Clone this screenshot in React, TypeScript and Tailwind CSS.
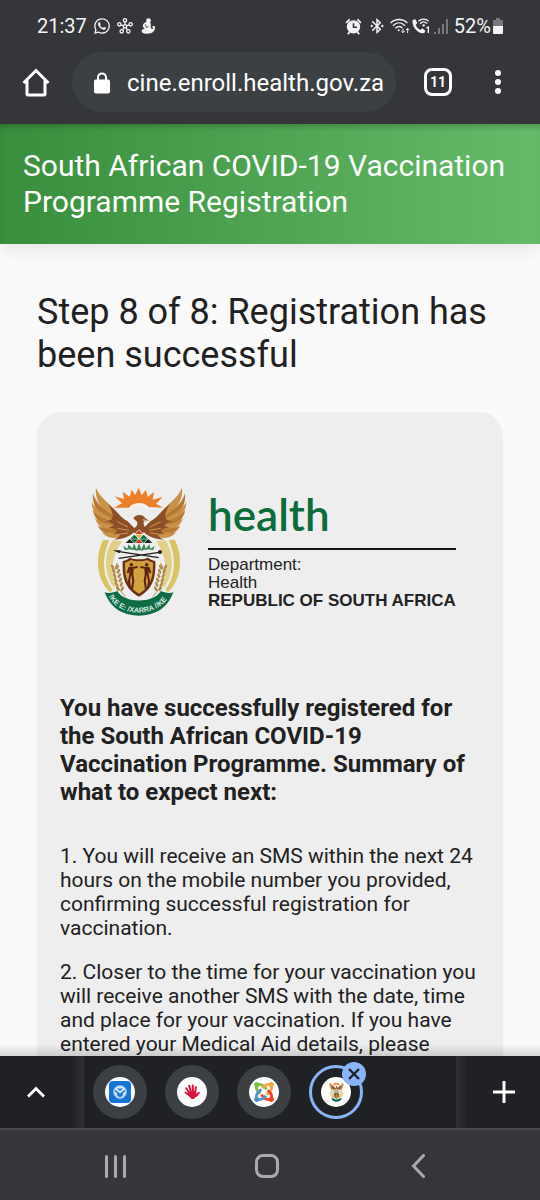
import React from "react";
import { FaWhatsapp } from "react-icons/fa";
import { MdBluetoothConnected } from "react-icons/md";

type IconProps = {
    className?: string;
};

const LEFT_FEATHERS = [
    "M48 24 C60 56 94 74 122 110 L112 122 C74 100 42 66 48 24Z",
    "M39 40 C48 76 80 94 114 118 L108 128 C64 114 34 84 39 40Z",
    "M35 66 C50 96 82 108 114 126 L108 135 C66 132 36 106 35 66Z",
    "M38 92 C56 116 86 123 118 132 L112 143 C74 148 46 126 38 92Z",
    "M44 116 C62 133 90 136 122 138 L116 151 C82 160 56 146 44 116Z",
    "M53 138 C72 149 98 147 128 146 L122 160 C90 171 66 162 53 138Z",
    "M66 158 C84 162 104 157 134 152 L128 168 C104 180 80 176 66 158Z",
];

const WHEAT = [262, 275, 288, 301, 314, 327];

const Half: React.FC = () => (
    <>
        {LEFT_FEATHERS.map((d, idx) => (
            <path key={d} d={d} fill={idx % 2 ? "#b77a30" : "#c9924a"} />
        ))}
        <path
            d="M84 74 C112 94 118 112 142 124 L168 150 C156 166 140 176 102 180 C124 170 128 160 96 163 C118 154 116 147 86 144 C108 138 104 132 76 124 C104 124 104 104 84 74Z"
            fill="#8c4f26"
        />
        <path d="M112 126 L144 142 M112 146 L146 152 M116 164 L144 160" stroke="#c9975a" strokeWidth="3" />
        <path d="M70 180 C44 228 48 298 90 338 L98 330 C68 292 64 236 88 182Z" fill="#d8c466" />
        <path d="M98 182 C70 222 72 286 102 324 L108 316 C90 280 94 230 126 184Z" fill="#e0d089" />
        <path d="M112 250 C94 284 104 318 136 350" fill="none" stroke="#a88440" strokeWidth="3" />
        {WHEAT.map((y, idx) => (
            <g key={y} fill="#b08b47">
                <ellipse cx={98 + idx * 3} cy={y} rx="4" ry="8" transform={`rotate(-32 ${98 + idx * 3} ${y})`} />
                <ellipse cx={112 + idx * 3} cy={y} rx="4" ry="8" transform={`rotate(28 ${112 + idx * 3} ${y})`} />
            </g>
        ))}
    </>
);

const Figure: React.FC = () => (
    <g fill="#5d2415" stroke="#5d2415" strokeLinejoin="round">
        <circle cx="154" cy="255" r="5" />
        <path d="M147 262 L161 262 L159 286 L149 286Z" />
        <path d="M148 264 L143 280 M160 264 L173 262 M151 285 L147 304 L150 326 M157 285 L160 304 L156 328" fill="none" strokeWidth="6" />
    </g>
);

const CoatOfArms: React.FC<IconProps & { motto?: boolean }> = ({ className, motto = false }) => (
    <svg viewBox="30 22 294 390" className={className} fill="none" aria-hidden="true">
        <Half />
        <g transform="translate(354 0) scale(-1 1)">
            <Half />
        </g>

        <path
            d="M104 50 L132 58 L128 36 L149 51 L155 30 L166 46 L176 24 L185 47 L198 30 L203 52 L222 37 L218 60 L248 52 L228 72 L250 84 L206 82 C194 66 160 66 147 84 L102 84 L126 71Z"
            fill="#ec7f2a"
        />
        <path d="M150 88 C158 70 194 70 203 88" stroke="#f7f2ea" strokeWidth="6" />

        <path d="M160 116 C168 102 190 104 195 115 L207 123 L192 125 C188 134 194 144 204 152 L176 166 L148 152 C166 146 176 136 171 126Z" fill="#8c4f26" />
        <path d="M188 118 L207 123 L192 127Z" fill="#d9b98c" />

        <path d="M177 149 L217 189 L137 189Z" fill="#f5f1e6" />
        <path d="M177 151 L188 163 L166 163Z" fill="#d23b2b" />
        <path d="M163 165 L175 177 L151 177Z M191 165 L203 177 L179 177Z" fill="#0c6b3c" />
        <path d="M166 165 L188 165 L177 176Z" fill="#e3b23a" />
        <path d="M149 178 L161 190 L137 190Z M205 178 L217 190 L193 190Z" fill="#262320" />
        <path d="M177 178 L189 190 L165 190Z" fill="#d23b2b" />
        <path d="M152 179 L174 179 L163 190Z M180 179 L202 179 L191 190Z" fill="#0c6b3c" />
        <path
            d="M177 190 L185 212 L169 212Z M162 191 L172 214 L156 209Z M192 191 L198 209 L182 214Z M146 194 L160 211 L142 208Z M208 194 L212 208 L194 211Z M130 198 L146 210 L134 211Z M224 198 L220 211 L208 210Z"
            fill="#3c8a5b"
        />

        <path d="M118 216 L236 234 M238 218 L116 236" stroke="#211e1c" strokeWidth="4" />
        <path d="M98 212 L122 212 L119 221Z" fill="#211e1c" />
        <circle cx="240" cy="217" r="6" fill="#211e1c" />

        <path d="M128 244 C138 242 144 238 150 234 C164 240 190 240 204 234 C210 238 216 242 226 244 C228 296 218 328 177 351 C136 328 126 296 128 244Z" fill="#6b2e18" />
        <path d="M135 249 C143 247 148 244 152 241 C166 246 188 246 202 241 C206 244 211 247 219 249 C220 292 212 321 177 342 C142 321 134 292 135 249Z" fill="#d2a23f" />
        <Figure />
        <g transform="translate(354 0) scale(-1 1)">
            <Figure />
        </g>

        <path
            d="M74 338 C88 342 102 338 112 334 C132 372 222 372 242 334 C252 338 266 342 280 338 C262 388 222 408 177 408 C132 408 92 388 74 338Z"
            fill="#0e6b43"
        />
        {motto && (
            <>
                <path id="motto-arc" d="M86 350 C120 416 234 416 270 346" />
                <text className="fill-[#dce9e1] font-bold" fontSize="22" fontFamily="Liberation Sans, sans-serif">
                    <textPath href="#motto-arc">!KE E: /XARRA //KE</textPath>
                </text>
            </>
        )}
    </svg>
);

const HubIcon: React.FC<IconProps> = ({ className }) => (
    <svg viewBox="0 0 24 24" className={className} fill="none" stroke="currentColor" strokeWidth="2" aria-hidden="true">
        <circle cx="12" cy="12.500" r="2.500" />
        <circle cx="12" cy="3.500" r="2.500" />
        <circle cx="3.500" cy="9.500" r="2.500" />
        <circle cx="20.500" cy="9.500" r="2.500" />
        <circle cx="7" cy="20" r="2.500" />
        <circle cx="17" cy="20" r="2.500" />
        <path d="M12 6v4M6 10.300l3.500 1.400M18 10.300l-3.500 1.400M8.300 18l2-3.500M15.700 18l-2-3.500" />
    </svg>
);

const MermaidIcon: React.FC<IconProps> = ({ className }) => (
    <svg viewBox="0 0 26 30" className={className} fill="currentColor" aria-hidden="true">
        <circle cx="14" cy="5" r="4.500" />
        <path d="M11 7 C17 7 20 11 18 16 C18 20 21 22 23 19 L20 16 L26 15 L26 20 C25 26 20 29 14 29 C7 30 1 29 1 25 C1 22 4 20 7 20 C4 18 2 15 4 12 C5 9 8 8 11 7Z" />
        <path d="M8 12 L10 18 L14 16" fill="none" stroke="#35363a" strokeWidth="1.500" />
    </svg>
);

const AlarmIcon: React.FC<IconProps> = ({ className }) => (
    <svg viewBox="0 0 24 24" className={className} aria-hidden="true">
        <circle cx="12" cy="12.500" r="9.500" fill="currentColor" />
        <path d="M1.500 7 L6.500 2 M22.500 7 L17.500 2 M4 23 L6.500 20 M20 23 L17.500 20" stroke="currentColor" strokeWidth="2.500" />
        <path d="M12 7.500 V13 H17" fill="none" stroke="#35363a" strokeWidth="2.200" />
    </svg>
);

const WifiIcon: React.FC<IconProps> = ({ className }) => (
    <svg viewBox="0 0 60 48" className={className} fill="none" stroke="currentColor" strokeWidth="4" aria-hidden="true">
        <path d="M2 15 C16 1 38 1 52 15 M9 23 C20 12 34 12 45 23 M16 31 C23 24 31 24 37 30" />
        <circle cx="26" cy="37" r="3" fill="currentColor" stroke="none" />
        <path d="M39 32 V44 M34 39 L39 44 L44 39 M53 45 V31 M48 36 L53 31 L58 36" strokeWidth="3" />
    </svg>
);

const WifiCallIcon: React.FC<IconProps> = ({ className }) => (
    <svg viewBox="0 0 54 48" className={className} aria-hidden="true">
        <path d="M2 6 L10 4 L16 15 L11 21 C14 28 19 33 25 36 L31 31 L40 38 L37 45 C18 49 -2 26 2 6Z" fill="currentColor" />
        <path d="M19 10 C28 1 42 1 50 10 M24 17 C31 10 39 10 45 17" fill="none" stroke="currentColor" strokeWidth="4" />
        <circle cx="35" cy="22" r="3.500" fill="currentColor" />
        <path d="M43 30 L49 27 V45" fill="none" stroke="currentColor" strokeWidth="4" />
    </svg>
);

const SignalIcon: React.FC<IconProps> = ({ className }) => (
    <svg viewBox="0 0 15 16" className={className} fill="#77787b" aria-hidden="true">
        <path d="M0 14h2v2h-2z M4 10h2v6h-2z M8 6h2v10h-2z M12 1h2v15h-2z" />
    </svg>
);

const BatteryIcon: React.FC<IconProps> = ({ className }) => (
    <svg viewBox="0 0 10 16" className={className} aria-hidden="true">
        <path d="M3 0h4v2h3v6H0V2h3z" fill="#77787b" />
        <path d="M0 8h10v7q0 1-1 1H1q-1 0-1-1z" fill="#f4f4f4" />
    </svg>
);

const LockIcon: React.FC<IconProps> = ({ className }) => (
    <svg viewBox="0 0 16 22" className={className} aria-hidden="true">
        <path d="M4 9 V5.500 C4 0 12 0 12 5.500 V9" fill="none" stroke="currentColor" strokeWidth="2" />
        <rect y="7.500" width="16" height="14" rx="1.800" fill="currentColor" />
    </svg>
);

const ShieldAppIcon: React.FC = () => (
    <svg viewBox="0 0 22 22" className="size-[22px]" aria-hidden="true">
        <rect width="22" height="22" rx="4" fill="#1573d2" />
        <circle cx="11" cy="11" r="6.500" fill="#cfe4f7" stroke="#7eb4e8" />
        <path d="M6 9.500 L11 13.500 L16 9.500 M8 13 L11 15.500 L14 13" fill="none" stroke="#1573d2" strokeWidth="1.600" />
        <path d="M9 7.500 L11 9 L13 7.500" fill="none" stroke="#1573d2" strokeWidth="1.400" />
    </svg>
);

const HandIcon: React.FC = () => (
    <svg viewBox="0 0 16 16" className="size-4" fill="none" stroke="#dc143c" strokeWidth="2" strokeLinecap="round" aria-hidden="true">
        <path d="M5.500 9 L2.200 4.200 M7 8 L5.200 1.800 M9 8 L8.800 1.500 M11 9 L12 3.200 M12 12 L14.800 8.800 M5 11 L1.500 8.500" />
        <path d="M4.800 8 L11.500 7.500 L12.500 11 L10 14.500 L7.500 14.500 L4.200 11Z" fill="#dc143c" strokeWidth="1" />
    </svg>
);

const JOOMLA_ARMS = [
    { angle: 0, color: "#7ac143" },
    { angle: 90, color: "#f9a541" },
    { angle: 180, color: "#f44321" },
    { angle: 270, color: "#5091cd" },
];

const JoomlaIcon: React.FC = () => (
    <svg viewBox="0 0 24 24" className="size-[22px]" aria-hidden="true">
        {JOOMLA_ARMS.map(({ angle, color }) => (
            <g key={angle} transform={`rotate(${angle} 12 12)`}>
                <path d="M8 14 L5.500 11.500 C3.500 9.500 3.300 7 4 4 C7 3.300 9.500 3.500 11.500 5.500 L15 9" fill="none" stroke={color} strokeWidth="3" />
                <circle cx="4" cy="4" r="2.800" fill={color} />
            </g>
        ))}
    </svg>
);

const StatusBar: React.FC = () => (
    <div className="flex h-[50px] items-center justify-between px-[37px] pt-0.5 text-xl text-[#f4f4f4]">
        <div className="flex items-center gap-1.5">
            <span>21:37</span>
            <FaWhatsapp className="size-[18px]" />
            <HubIcon className="size-4" />
            <MermaidIcon className="ml-0.5 h-4 w-[14px]" />
        </div>
        <div className="flex items-center">
            <AlarmIcon className="mr-1.5 size-[17px]" />
            <MdBluetoothConnected className="mr-1 size-[18px]" />
            <WifiIcon className="mr-0.5 h-4 w-5" />
            <WifiCallIcon className="mr-1 h-4 w-[18px]" />
            <SignalIcon className="mr-[5px] h-4 w-[15px]" />
            <span>52%</span>
            <BatteryIcon className="ml-0.5 h-4 w-[10px]" />
        </div>
    </div>
);

const AddressBar: React.FC = () => (
    <div className="flex items-center pt-0.5 pr-[29px] pb-3 pl-5 text-white">
        <button type="button" aria-label="Home" className="mr-5">
            <svg viewBox="0 0 32 32" className="size-8" fill="none" stroke="currentColor" strokeWidth="3" aria-hidden="true">
                <path d="M3.500 17 L16 4.500 L28.500 17 M7 14 V28 Q7 29 8 29 H24 Q25 29 25 28 V14" strokeLinejoin="miter" />
            </svg>
        </button>
        <label className="flex h-[60px] min-w-0 flex-1 items-center rounded-full bg-[#3c4043] pt-0.5 pr-2 pl-[22px]">
            <LockIcon className="mr-[17px] h-[22px] w-4 shrink-0" />
            <input
                type="text"
                aria-label="Address"
                defaultValue="cine.enroll.health.gov.za"
                className="w-full min-w-0 bg-transparent text-2xl outline-none"
            />
        </label>
        <button
            type="button"
            aria-label="Open tabs"
            className="ml-7 flex size-7 items-center justify-center rounded-lg border-[3px] border-white text-sm font-bold"
        >
            11
        </button>
        <button type="button" aria-label="Menu" className="ml-8 flex w-[27px] flex-col items-center gap-[3px]">
            <span className="size-1.5 rounded-full bg-white" />
            <span className="size-1.5 rounded-full bg-white" />
            <span className="size-1.5 rounded-full bg-white" />
        </button>
    </div>
);

const DepartmentLogo: React.FC = () => (
    <div className="flex items-start">
        <CoatOfArms motto className="h-[130px] w-[98px] shrink-0" />
        <div className="ml-5 font-['Liberation_Sans',sans-serif] text-[#222]">
            <p className="font-['Lato',sans-serif] text-[44px] leading-[54px] font-semibold text-[#0e6b3a]">health</p>
            <div className="mt-[7px] mb-1.5 h-0.5 bg-[#161616]" />
            <p className="text-[17px] leading-[18px]">Department:</p>
            <p className="text-[17px] leading-[18px]">Health</p>
            <p className="text-[17px] leading-[18px] font-bold whitespace-nowrap">REPUBLIC OF SOUTH AFRICA</p>
        </div>
    </div>
);

type TabProps = {
    label: string;
    children: React.ReactNode;
};

const Tab: React.FC<TabProps> = ({ label, children }) => (
    <button
        type="button"
        aria-label={label}
        className="flex size-[54px] shrink-0 items-center justify-center rounded-full bg-[#3c4043]"
    >
        <span className="flex size-[30px] items-center justify-center rounded-full bg-white">{children}</span>
    </button>
);

const TabStrip: React.FC = () => (
    <div className="flex h-[72px] bg-[#202124] text-white">
        <button type="button" aria-label="Show all tabs" className="flex w-[84px] shrink-0 items-center">
            <span className="flex flex-1 justify-center">
                <svg viewBox="0 0 18 12" className="h-3 w-[18px]" fill="none" stroke="currentColor" strokeWidth="3" aria-hidden="true">
                    <path d="M1 10.500 L9 2.500 L17 10.500" />
                </svg>
            </span>
            <span className="h-full w-3 bg-linear-to-r from-[#202124] to-[#303134]" />
        </button>
        <div className="flex flex-1 items-center gap-[18px] pl-[9px]">
            <Tab label="Shield">
                <ShieldAppIcon />
            </Tab>
            <Tab label="Hand">
                <HandIcon />
            </Tab>
            <Tab label="Joomla">
                <JoomlaIcon />
            </Tab>
            <div className="relative">
                <button
                    type="button"
                    aria-label="Vaccination registration"
                    className="flex size-[54px] items-center justify-center rounded-full border-[3px] border-[#8ab4f8]"
                >
                    <span className="flex size-[30px] items-center justify-center rounded-full bg-white">
                        <CoatOfArms className="h-5 w-[15px]" />
                    </span>
                </button>
                <button
                    type="button"
                    aria-label="Close tab"
                    className="absolute -top-[3px] -right-[3px] flex size-6 items-center justify-center rounded-full bg-[#8ab4f8]"
                >
                    <svg viewBox="0 0 12 12" className="size-3" stroke="#202124" strokeWidth="2.400" aria-hidden="true">
                        <path d="M1 1 L11 11 M11 1 L1 11" />
                    </svg>
                </button>
            </div>
        </div>
        <button type="button" aria-label="New tab" className="flex w-[84px] shrink-0 items-center">
            <span className="h-full w-3 bg-linear-to-l from-[#202124] to-[#303134]" />
            <span className="flex flex-1 justify-center">
                <svg viewBox="0 0 22 22" className="size-[22px]" stroke="currentColor" strokeWidth="3" aria-hidden="true">
                    <path d="M11 0 V22 M0 11 H22" />
                </svg>
            </span>
        </button>
    </div>
);

const SystemNav: React.FC = () => (
    <nav className="flex h-[72px] items-center border-t-2 border-[#494a4d] bg-[#35363a] pt-0.5 pr-[46px] pl-10">
        <button type="button" aria-label="Recent apps" className="flex flex-1 justify-center gap-1.5">
            <span className="h-[23px] w-[3px] rounded-sm bg-[#a9aaad]" />
            <span className="h-[23px] w-[3px] rounded-sm bg-[#a9aaad]" />
            <span className="h-[23px] w-[3px] rounded-sm bg-[#a9aaad]" />
        </button>
        <button type="button" aria-label="Home screen" className="flex flex-1 justify-center">
            <span className="size-6 rounded-lg border-[3px] border-[#a9aaad]" />
        </button>
        <button type="button" aria-label="Back" className="flex flex-1 justify-center">
            <svg viewBox="0 0 14 24" className="h-6 w-[14px]" fill="none" stroke="#a9aaad" strokeWidth="3" aria-hidden="true">
                <path d="M12.500 1.500 L2.500 12 L12.500 22.500" strokeLinecap="round" />
            </svg>
        </button>
    </nav>
);

export default function App() {
    return (
        <div className="flex h-screen flex-col bg-[#fafafa] font-['Roboto',sans-serif] text-[#212121]">
            <div className="bg-[#35363a]">
                <StatusBar />
                <AddressBar />
            </div>

            <div className="min-h-0 flex-1 overflow-hidden">
                <header className="bg-linear-to-r from-[#388e3c] to-[#66bb6a] px-[23px] py-6 text-white shadow-[inset_0_6px_6px_-4px_rgba(0,0,0,0.25),0_8px_16px_-2px_rgba(0,0,0,0.08)]">
                    <p className="text-3xl leading-9">South African COVID-19 Vaccination Programme Registration</p>
                </header>

                <main className="px-[37px] pt-[47px]">
                    <h1 className="text-4xl leading-[43px]">Step 8 of 8: Registration has been successful</h1>

                    <section className="mt-[35px] rounded-3xl bg-[#eee] px-[23px] pt-[75px] pb-6">
                        <div className="pl-[30px]">
                            <DepartmentLogo />
                        </div>
                        <h2 className="mt-[77px] text-2xl leading-[28px] font-bold">
                            You have successfully registered for the South African COVID-19 Vaccination Programme. Summary of
                            what to expect next:
                        </h2>
                        <div className="mt-[38px] flex flex-col gap-5 text-[21px] leading-[24px]">
                            <p>
                                1. You will receive an SMS within the next 24 hours on the mobile number you provided,
                                confirming successful registration for vaccination.
                            </p>
                            <p>
                                2. Closer to the time for your vaccination you will receive another SMS with the date, time
                                and place for your vaccination. If you have entered your Medical Aid details, please
                            </p>
                        </div>
                    </section>
                </main>
            </div>

            <div className="relative">
                <div className="absolute inset-x-0 bottom-full h-3 bg-linear-to-t from-black/15 to-transparent" />
                <TabStrip />
            </div>
            <SystemNav />
        </div>
    );
}
